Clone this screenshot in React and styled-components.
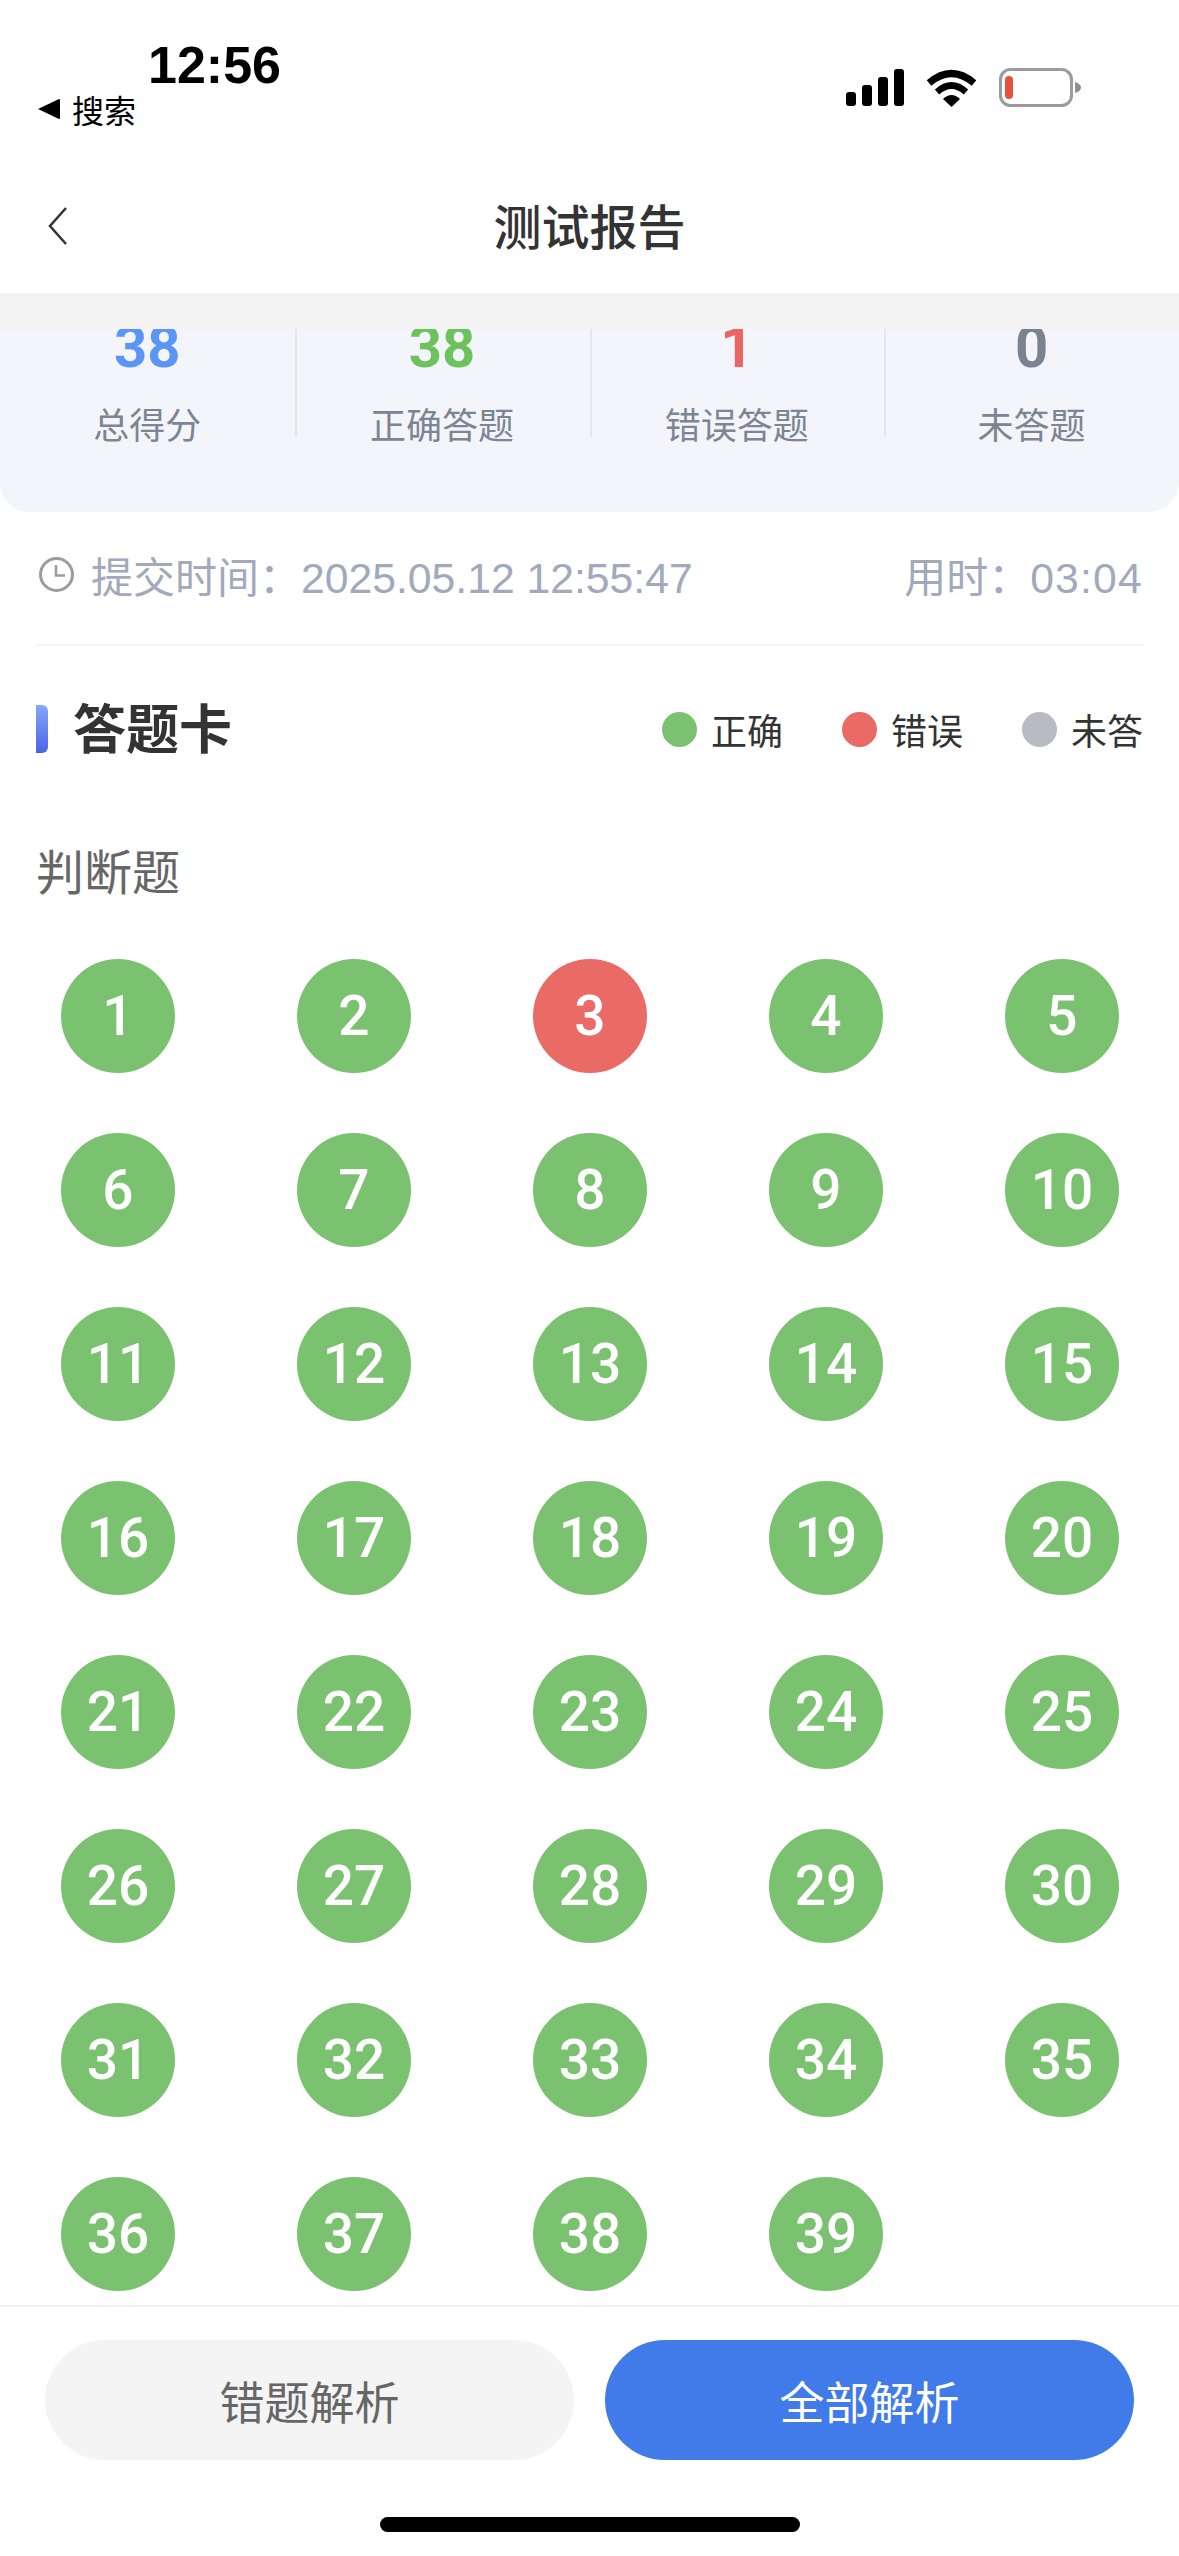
import React from "react";
import styled, { createGlobalStyle } from "styled-components";

const GlobalStyle = createGlobalStyle`
  html, body {
    margin: 0;
    padding: 0;
    background: #fff;
  }
  * {
    box-sizing: border-box;
  }
`;

const CJK = `"Noto Sans CJK SC", sans-serif`;
const NUM = `Roboto, "Noto Sans CJK SC", sans-serif`;

const STATE_COLORS = {
  right: "#7ac270",
  wrong: "#ea6a65",
  blank: "#b8bbc4",
};

const stats = [
  { value: 38, label: "总得分", color: "#5b95f7" },
  { value: 38, label: "正确答题", color: "#6cc35d" },
  { value: 1, label: "错误答题", color: "#ea6662" },
  { value: 0, label: "未答题", color: "#7a8290" },
];

const legend = [
  { state: "right", label: "正确" },
  { state: "wrong", label: "错误" },
  { state: "blank", label: "未答" },
];

const questions = Array.from({ length: 39 }, (_, i) => ({
  no: i + 1,
  state: i === 2 ? "wrong" : "right",
}));

const Page = styled.div`
  width: 1179px;
  height: 2556px;
  display: flex;
  flex-direction: column;
  overflow: hidden;
  background: #fff;
  font-family: ${CJK};
`;

const StatusBar = styled.div`
  height: 160px;
  flex: none;
  display: flex;
  justify-content: space-between;
  align-items: flex-start;
  padding: 0 98px 0 38px;
  color: #000;
`;

const StatusLeft = styled.div`
  display: flex;
  flex-direction: column;
`;

const Clock = styled.div`
  margin: 35px 0 0 110px;
  font: 700 52px/60px "Liberation Sans", sans-serif;
`;

const BackToApp = styled.div`
  display: flex;
  align-items: center;
  gap: 12px;
  height: 40px;
  margin-top: -6px;
  font-size: 32px;
  line-height: 40px;
`;

const StatusRight = styled.div`
  display: flex;
  align-items: center;
  gap: 22px;
  margin-top: 68px;
`;

const NavBar = styled.div`
  position: relative;
  height: 133px;
  flex: none;
  display: flex;
  align-items: center;
  justify-content: center;
  padding-bottom: 5px;
`;

const BackButton = styled.button`
  position: absolute;
  left: 46px;
  top: 47px;
  padding: 0;
  border: 0;
  background: none;
  display: flex;
`;

const NavTitle = styled.div`
  font-size: 48px;
  font-weight: 500;
  color: #333;
`;

const Band = styled.div`
  height: 36px;
  flex: none;
  background: #f3f3f4;
`;

const StatsCard = styled.div`
  height: 183px;
  flex: none;
  display: grid;
  grid-template-columns: repeat(4, 1fr);
  overflow: hidden;
  background: #f3f5fa;
  border-radius: 0 0 30px 30px;
`;

const StatCell = styled.div`
  position: relative;
  text-align: center;

  &:not(:last-child)::after {
    content: "";
    position: absolute;
    top: 0;
    right: -2px;
    width: 2px;
    height: 108px;
    background: #e3e6ed;
  }
`;

const StatValue = styled.div`
  margin-top: -12px;
  font: 700 58px/60px ${NUM};
  color: ${(p) => p.$color};
`;

const StatLabel = styled.div`
  margin-top: 24px;
  font-size: 36px;
  line-height: 44px;
  color: #7d8494;
`;

const InfoRow = styled.div`
  height: 134px;
  flex: none;
  margin: 0 36px;
  display: flex;
  align-items: center;
  justify-content: space-between;
  border-bottom: 2px solid #f3f3f4;
  padding-bottom: 8px;
  font-size: 42px;
  color: #a1a9bb;
`;

const InfoLeft = styled.div`
  display: flex;
  align-items: center;
  gap: 17px;
  padding-left: 3px;
`;

const InfoNum = styled.span`
  font-family: "Liberation Sans", sans-serif;
  font-size: 42.7px;
`;

const InfoTime = styled(InfoNum)`
  letter-spacing: 1.2px;
`;

const SectionHead = styled.div`
  height: 106px;
  flex: none;
  margin-top: 30px;
  display: flex;
  align-items: center;
  justify-content: space-between;
  padding: 0 36px;
`;

const SectionTitle = styled.div`
  display: flex;
  align-items: center;
  gap: 25px;
  font-size: 53px;
  font-weight: 700;
  color: #333;

  &::before {
    content: "";
    width: 12px;
    height: 48px;
    border-radius: 0 6px 6px 0;
    background: linear-gradient(180deg, #84a8f7, #4a63e8);
  }
`;

const SectionText = styled.span`
  margin-top: -6px;
`;

const Legend = styled.div`
  display: flex;
  gap: 59px;
`;

const LegendItem = styled.div`
  display: flex;
  align-items: center;
  gap: 14px;
  font-size: 36px;
  line-height: 44px;
  color: #333;
`;

const Dot = styled.span`
  width: 35px;
  height: 35px;
  border-radius: 50%;
  background: ${(p) => STATE_COLORS[p.$state]};
`;

const GroupTitle = styled.div`
  margin: 57px 0 0 36px;
  font-size: 48px;
  line-height: 60px;
  color: #666;
`;

const AnswerGrid = styled.div`
  flex: 1;
  display: grid;
  grid-template-columns: repeat(5, 114px);
  grid-auto-rows: 114px;
  column-gap: 122px;
  row-gap: 60px;
  padding: 60px 0 0 61px;
  overflow: hidden;
`;

const AnswerBall = styled.div`
  display: flex;
  align-items: center;
  justify-content: center;
  border-radius: 50%;
  background: ${(p) => STATE_COLORS[p.$state]};
  color: #fff;
  font: 500 55px/1 ${NUM};
`;

const Footer = styled.div`
  height: 251px;
  flex: none;
  display: flex;
  flex-direction: column;
  align-items: center;
  border-top: 2px solid #f3f3f4;
  background: #fff;
`;

const Buttons = styled.div`
  display: flex;
  gap: 31px;
  margin-top: 33px;
`;

const Action = styled.button`
  width: 529px;
  height: 120px;
  border: 0;
  border-radius: 60px;
  padding: 0;
  font-family: ${CJK};
  font-size: 45px;
  background: ${(p) => (p.$primary ? "#407be9" : "#f4f4f4")};
  color: ${(p) => (p.$primary ? "#fff" : "#666")};
`;

const HomeBar = styled.div`
  width: 420px;
  height: 15px;
  margin-top: 57px;
  border-radius: 8px;
  background: #000;
`;

const SignalIcon = () => (
  <svg width="58" height="37" viewBox="0 0 58 37">
    <rect x="0" y="23" width="10" height="14" rx="3" fill="#000" />
    <rect x="16" y="16" width="10" height="21" rx="3" fill="#000" />
    <rect x="32" y="8" width="10" height="29" rx="3" fill="#000" />
    <rect x="48" y="0" width="10" height="37" rx="3" fill="#000" />
  </svg>
);

const WifiIcon = () => (
  <svg width="51" height="38" viewBox="0 0 51 38">
    <path d="M3 14 Q25.5 -5 48 14" fill="none" stroke="#000" strokeWidth="7" />
    <path d="M11 23 Q25.5 10 40 23" fill="none" stroke="#000" strokeWidth="6.5" />
    <path d="M17 30 Q25.5 22 34 30 L25.5 38 Z" fill="#000" />
  </svg>
);

const BatteryIcon = () => (
  <svg width="82" height="39" viewBox="0 0 82 39">
    <rect x="1.5" y="1.5" width="71" height="36" rx="10" fill="#fff" stroke="#9b9b9b" strokeWidth="3" />
    <rect x="6" y="8" width="8" height="23" rx="4" fill="#e8503d" />
    <path d="M76 14 Q82 16 82 19.5 Q82 23 76 25 Z" fill="#8e8e8e" />
  </svg>
);

const TriangleIcon = () => (
  <svg width="22" height="20" viewBox="0 0 22 20">
    <path d="M0 10 L21 0 Q22 0 22 1 L22 19 Q22 20 21 20 Z" fill="#000" />
  </svg>
);

const ChevronIcon = () => (
  <svg width="22" height="38" viewBox="0 0 22 38">
    <polyline points="20,1 4,19 20,37" fill="none" stroke="#333" strokeWidth="2.5" />
  </svg>
);

const ClockIcon = () => (
  <svg width="35" height="35" viewBox="0 0 35 35">
    <circle cx="17.5" cy="17.5" r="16" fill="none" stroke="#9c9c9c" strokeWidth="3" />
    <polyline points="17,8 17,18.5 26,18.5" fill="none" stroke="#9c9c9c" strokeWidth="2.5" />
  </svg>
);

export default function App() {
  return (
    <>
      <GlobalStyle />
      <Page>
        <StatusBar>
          <StatusLeft>
            <Clock>12:56</Clock>
            <BackToApp>
              <TriangleIcon />
              搜索
            </BackToApp>
          </StatusLeft>
          <StatusRight>
            <SignalIcon />
            <WifiIcon />
            <BatteryIcon />
          </StatusRight>
        </StatusBar>

        <NavBar>
          <BackButton>
            <ChevronIcon />
          </BackButton>
          <NavTitle>测试报告</NavTitle>
        </NavBar>

        <Band />

        <StatsCard>
          {stats.map((s) => (
            <StatCell key={s.label}>
              <StatValue $color={s.color}>{s.value}</StatValue>
              <StatLabel>{s.label}</StatLabel>
            </StatCell>
          ))}
        </StatsCard>

        <InfoRow>
          <InfoLeft>
            <ClockIcon />
            <span>
              提交时间：<InfoNum>2025.05.12 12:55:47</InfoNum>
            </span>
          </InfoLeft>
          <span>
            用时：<InfoTime>03:04</InfoTime>
          </span>
        </InfoRow>

        <SectionHead>
          <SectionTitle>
            <SectionText>答题卡</SectionText>
          </SectionTitle>
          <Legend>
            {legend.map((l) => (
              <LegendItem key={l.state}>
                <Dot $state={l.state} />
                {l.label}
              </LegendItem>
            ))}
          </Legend>
        </SectionHead>

        <GroupTitle>判断题</GroupTitle>

        <AnswerGrid>
          {questions.map((q) => (
            <AnswerBall key={q.no} $state={q.state}>
              {q.no}
            </AnswerBall>
          ))}
        </AnswerGrid>

        <Footer>
          <Buttons>
            <Action>错题解析</Action>
            <Action $primary>全部解析</Action>
          </Buttons>
          <HomeBar />
        </Footer>
      </Page>
    </>
  );
}
